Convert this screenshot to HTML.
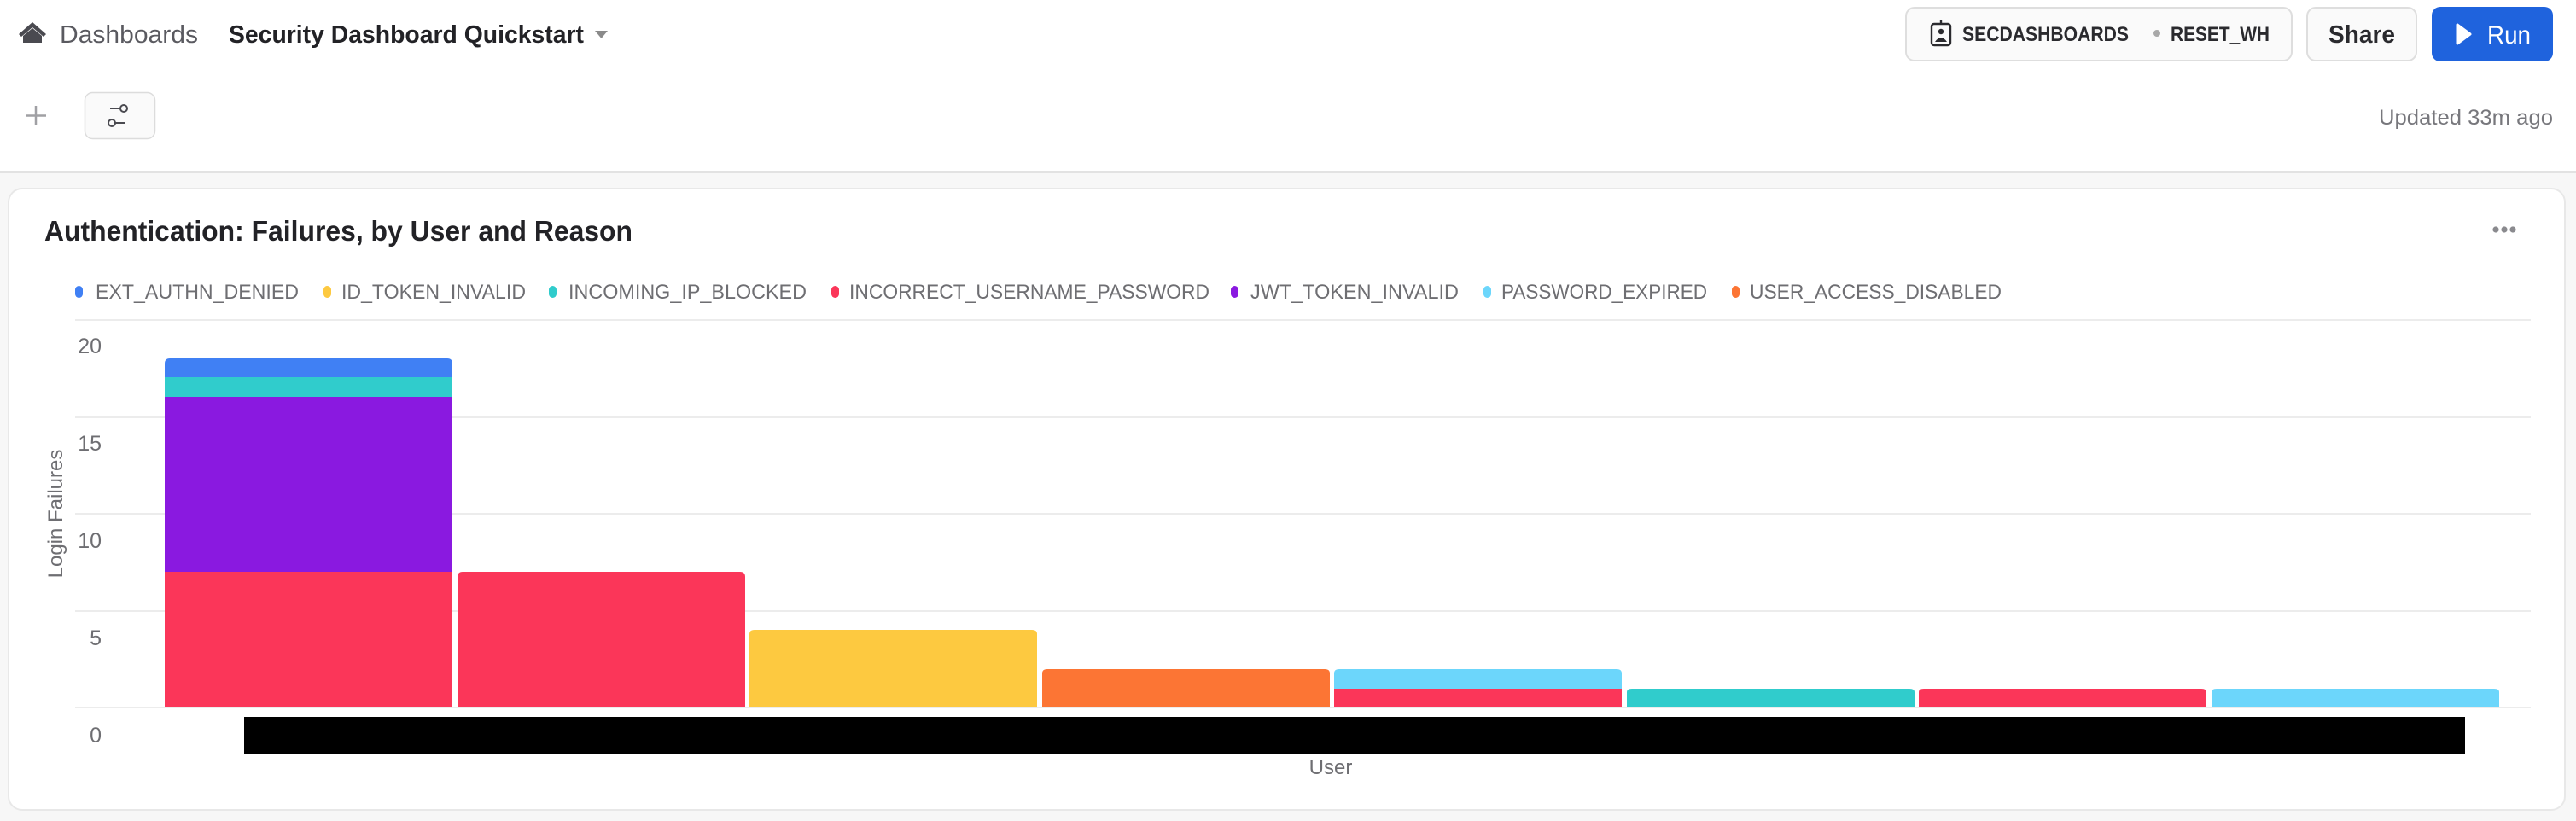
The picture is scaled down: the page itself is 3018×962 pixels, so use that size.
<!DOCTYPE html>
<html><head><meta charset="utf-8"><style>
html,body{margin:0;padding:0;background:#fff;}
svg{display:block;font-family:"Liberation Sans",Arial,sans-serif;}
</style></head><body>
<svg width="3018" height="962" viewBox="0 0 3018 962" xmlns="http://www.w3.org/2000/svg">
<rect x="0" y="0" width="3018" height="962" fill="#fff"/>
<!-- top bar -->
<path d="M38 26 L22 40 L25 43 L38 32 L51 43 L54 40 Z" fill="#4a4a50"/>
<path d="M27 42 L38 33 L49 42 L49 50 L27 50 Z" fill="#4a4a50"/>
<text x="70" y="50" font-size="29" fill="#5a5a60" textLength="162" lengthAdjust="spacingAndGlyphs">Dashboards</text>
<text x="268" y="50" font-size="29" font-weight="bold" fill="#222226" textLength="416" lengthAdjust="spacingAndGlyphs">Security Dashboard Quickstart</text>
<path d="M697 36 L712 36 L704.5 45 Z" fill="#8a8a8a"/>
<!-- plus / filter -->
<path d="M42 124 V147 M30 135.5 H54" stroke="#a0a0a4" stroke-width="2.5"/>
<rect x="99.5" y="108.5" width="82" height="54" rx="9" fill="#fafafa" stroke="#dcdcdc" stroke-width="1.5"/>
<path d="M129 127 H141 M134 144 H147" stroke="#4a4a50" stroke-width="2"/>
<circle cx="145" cy="127" r="4" fill="none" stroke="#4a4a50" stroke-width="2"/>
<circle cx="131" cy="144" r="4" fill="none" stroke="#4a4a50" stroke-width="2"/>
<!-- right buttons -->
<rect x="2233" y="9" width="452" height="62" rx="10" fill="#fafafa" stroke="#dedede" stroke-width="2"/>
<rect x="2263" y="28" width="22" height="25" rx="3" fill="none" stroke="#2a2a2e" stroke-width="2.4"/>
<path d="M2274 23 V28" stroke="#2a2a2e" stroke-width="2.4"/>
<circle cx="2274" cy="37" r="3.2" fill="#2a2a2e"/>
<path d="M2267 49 Q2274 39 2281 49 Z" fill="#2a2a2e"/>
<text x="2299" y="48" font-size="24" font-weight="bold" fill="#2a2a2e" textLength="195" lengthAdjust="spacingAndGlyphs">SECDASHBOARDS</text>
<circle cx="2527" cy="39" r="4" fill="#a8a8a8"/>
<text x="2543" y="48" font-size="24" font-weight="bold" fill="#2a2a2e" textLength="116" lengthAdjust="spacingAndGlyphs">RESET_WH</text>
<rect x="2703" y="9" width="128" height="62" rx="10" fill="#fafafa" stroke="#dedede" stroke-width="2"/>
<text x="2728" y="50" font-size="29" font-weight="bold" fill="#2a2a2e" textLength="78" lengthAdjust="spacingAndGlyphs">Share</text>
<rect x="2849" y="8" width="142" height="64" rx="10" fill="#1f63dd"/>
<path d="M2879 29 L2879 51 L2894 40 Z" fill="#fff" stroke="#fff" stroke-width="3" stroke-linejoin="round"/>
<text x="2914" y="51" font-size="30" fill="#fff" textLength="51" lengthAdjust="spacingAndGlyphs">Run</text>
<text x="2787" y="146" font-size="25" fill="#77777c" textLength="204" lengthAdjust="spacingAndGlyphs">Updated 33m ago</text>
<!-- divider / background -->
<rect x="0" y="201" width="3018" height="761" fill="#f7f7f7"/>
<rect x="0" y="200" width="3018" height="3" fill="#e2e2e2"/>
<!-- card -->
<rect x="10" y="221" width="2995" height="728" rx="16" fill="#fff" stroke="#e8e8e8" stroke-width="2"/>
<text x="52" y="282" font-size="33" font-weight="bold" fill="#222226" textLength="689" lengthAdjust="spacingAndGlyphs">Authentication: Failures, by User and Reason</text>
<circle cx="2924" cy="269" r="3.6" fill="#8a8a8e"/><circle cx="2934" cy="269" r="3.6" fill="#8a8a8e"/><circle cx="2944" cy="269" r="3.6" fill="#8a8a8e"/>
<!-- legend -->
<g font-size="24" fill="#6e6e72">
<rect x="88" y="335" width="9" height="14" rx="4.5" fill="#4080f4"/><text x="112" y="350" textLength="238" lengthAdjust="spacingAndGlyphs">EXT_AUTHN_DENIED</text>
<rect x="379" y="335" width="9" height="14" rx="4.5" fill="#fdc940"/><text x="400" y="350" textLength="216" lengthAdjust="spacingAndGlyphs">ID_TOKEN_INVALID</text>
<rect x="643" y="335" width="9" height="14" rx="4.5" fill="#30cccc"/><text x="666" y="350" textLength="279" lengthAdjust="spacingAndGlyphs">INCOMING_IP_BLOCKED</text>
<rect x="974" y="335" width="9" height="14" rx="4.5" fill="#fb3659"/><text x="995" y="350" textLength="422" lengthAdjust="spacingAndGlyphs">INCORRECT_USERNAME_PASSWORD</text>
<rect x="1442" y="335" width="9" height="14" rx="4.5" fill="#8a19e0"/><text x="1465" y="350" textLength="244" lengthAdjust="spacingAndGlyphs">JWT_TOKEN_INVALID</text>
<rect x="1738" y="335" width="9" height="14" rx="4.5" fill="#6cd6fb"/><text x="1759" y="350" textLength="241" lengthAdjust="spacingAndGlyphs">PASSWORD_EXPIRED</text>
<rect x="2029" y="335" width="9" height="14" rx="4.5" fill="#fc7534"/><text x="2050" y="350" textLength="295" lengthAdjust="spacingAndGlyphs">USER_ACCESS_DISABLED</text>
</g>
<!-- grid -->
<g fill="#ececec">
<rect x="88" y="374" width="2877" height="2"/>
<rect x="88" y="488" width="2877" height="2"/>
<rect x="88" y="601" width="2877" height="2"/>
<rect x="88" y="715" width="2877" height="2"/>
<rect x="88" y="828" width="2877" height="2"/>
</g>
<g font-size="25" fill="#6e6e72" text-anchor="end">
<text x="119" y="414">20</text><text x="119" y="528">15</text><text x="119" y="642">10</text><text x="119" y="756">5</text><text x="119" y="870">0</text>
</g>
<text transform="translate(73,602) rotate(-90)" font-size="24" fill="#6e6e72" text-anchor="middle">Login Failures</text>
<!-- bars: base 829, 22.7px/unit -->
<g>
<path d="M193 829 V426 Q193 420 199 420 H524 Q530 420 530 426 V829 Z" fill="#4080f4"/>
<rect x="193" y="442" width="337" height="23" fill="#30cccc"/>
<rect x="193" y="465" width="337" height="205" fill="#8a19e0"/>
<rect x="193" y="670" width="337" height="159" fill="#fb3659"/>
<path d="M536 829 V676 Q536 670 542 670 H867 Q873 670 873 676 V829 Z" fill="#fb3659"/>
<path d="M878 829 V743 Q878 738 884 738 H1209 Q1215 738 1215 743 V829 Z" fill="#fdc940"/>
<path d="M1221 829 V789 Q1221 784 1227 784 H1552 Q1558 784 1558 789 V829 Z" fill="#fc7534"/>
<path d="M1563 829 V789 Q1563 784 1569 784 H1894 Q1900 784 1900 789 V829 Z" fill="#6cd6fb"/>
<rect x="1563" y="807" width="337" height="22" fill="#fb3659"/>
<path d="M1906 829 V811 Q1906 807 1912 807 H2237 Q2243 807 2243 811 V829 Z" fill="#30cccc"/>
<path d="M2248 829 V811 Q2248 807 2254 807 H2579 Q2585 807 2585 811 V829 Z" fill="#fb3659"/>
<path d="M2591 829 V811 Q2591 807 2597 807 H2922 Q2928 807 2928 811 V829 Z" fill="#6cd6fb"/>
</g>
<rect x="286" y="840" width="2602" height="44" fill="#000"/>
<text x="1559" y="907" font-size="24" fill="#6e6e72" text-anchor="middle">User</text>
</svg>
</body></html>
